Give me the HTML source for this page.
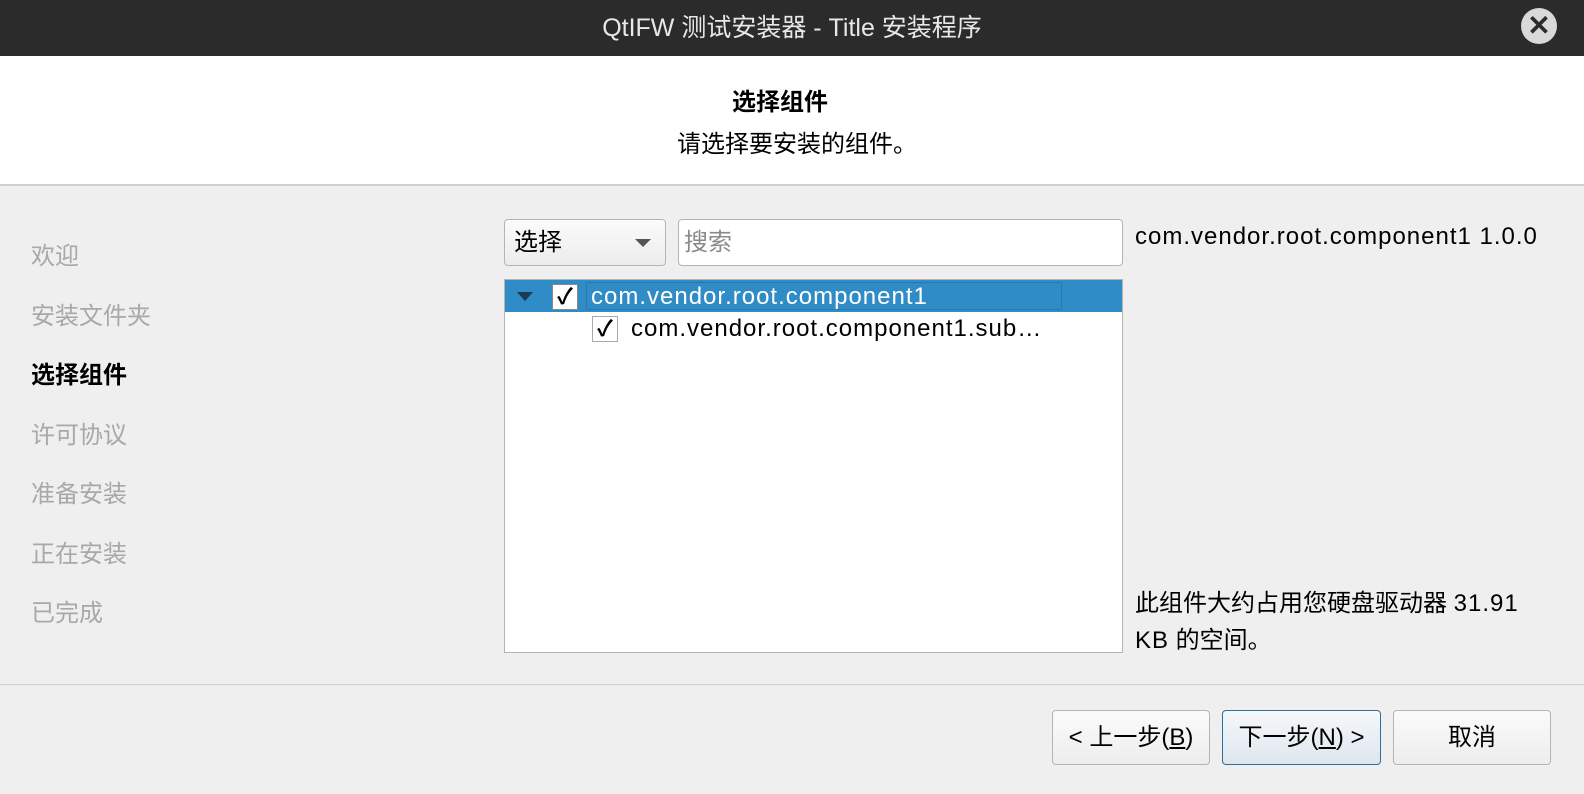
<!DOCTYPE html>
<html><head><meta charset="utf-8"><style>
*{margin:0;padding:0;box-sizing:border-box}
body{width:1584px;height:794px;background:#efefef;font-family:"Liberation Sans","Noto Sans CJK SC",sans-serif;position:relative;overflow:hidden;color:#000}
.a{position:absolute;white-space:nowrap}
.l{letter-spacing:1px}
</style></head><body>
<div class="a" style="left:0;top:0;width:1584px;height:56px;background:#2b2b2b;color:#e8e8e8;font-size:25px;line-height:56px;text-align:center">QtIFW 测试安装器 - Title 安装程序</div>
<div class="a" style="left:1521px;top:8px;width:36px;height:36px;border-radius:50%;background:#d9d9d9;color:#2b2b2b;font-size:28px;font-weight:bold;line-height:36px;text-align:center">✕</div>
<div class="a" style="left:0;top:56px;width:1584px;height:130px;background:#fff;border-bottom:2px solid #cfcfcf"></div>
<div class="a" style="left:0;top:82px;width:1560px;text-align:center;font-size:24px;font-weight:bold">选择组件</div>
<div class="a" style="left:0;top:124px;width:1594px;text-align:center;font-size:24px">请选择要安装的组件。</div>
<div class="a" style="left:31px;top:227px;font-size:24px;line-height:59.5px;color:#a8a8a8">欢迎<br>安装文件夹<br><b style="color:#000">选择组件</b><br>许可协议<br>准备安装<br>正在安装<br>已完成</div>
<div class="a" style="left:504px;top:219px;width:162px;height:47px;border:1px solid #b4b4b4;border-radius:4px;background:linear-gradient(#fbfbfb,#ececec);font-size:24px;line-height:45px;padding-left:9px">选择<span style="position:absolute;left:130px;top:19px;border-left:8px solid transparent;border-right:8px solid transparent;border-top:8px solid #555"></span></div>
<div class="a" style="left:678px;top:219px;width:445px;height:47px;border:1px solid #b4b4b4;border-radius:4px;background:#fff;font-size:24px;line-height:45px;padding-left:5px;color:#8a8a8a">搜索</div>
<div class="a" style="left:504px;top:279px;width:619px;height:374px;border:1px solid #b4b4b4;background:#fff"></div>
<div class="a" style="left:505px;top:280px;width:617px;height:32px;background:#308cc6"></div>
<div class="a" style="left:586px;top:282px;width:476px;height:28px;border:1px solid #2a78aa"></div>
<div class="a" style="left:517px;top:292px;border-left:8px solid transparent;border-right:8px solid transparent;border-top:9px solid #1a3a55"></div>
<div class="a" style="left:552px;top:284px;width:26px;height:26px;background:#fff;border:1px solid #888;font-size:22px;line-height:24px;text-align:center;font-weight:bold">✓</div>
<div class="a l" style="left:591px;top:282px;font-size:24px;line-height:30px;color:#fff">com.vendor.root.component1</div>
<div class="a" style="left:592px;top:316px;width:26px;height:26px;background:#fff;border:1px solid #aaa;font-size:22px;line-height:24px;text-align:center;font-weight:bold">✓</div>
<div class="a l" style="left:631px;top:314px;font-size:24px;line-height:30px">com.vendor.root.component1.sub…</div>
<div class="a l" style="left:1135px;top:222px;font-size:24px;line-height:30px">com.vendor.root.component1 1.0.0</div>
<div class="a" style="left:1135px;top:585px;font-size:24px;line-height:37px">此组件大约占用您硬盘驱动器 <span class="l">31.91</span><br><span class="l">KB</span> 的空间。</div>
<div class="a" style="left:0;top:684px;width:1584px;border-top:1px solid #cfcfcf"></div>
<div class="a" style="left:1052px;top:710px;width:158px;height:55px;border:1px solid #b4b4b4;border-radius:4px;background:linear-gradient(#fbfbfb,#ededed);font-size:24px;line-height:53px;text-align:center">&lt; 上一步(<u>B</u>)</div>
<div class="a" style="left:1222px;top:710px;width:159px;height:55px;border:1px solid #2a70a0;border-radius:4px;background:linear-gradient(#f6f8fa,#dde6ee);font-size:24px;line-height:53px;text-align:center">下一步(<u>N</u>) &gt;</div>
<div class="a" style="left:1393px;top:710px;width:158px;height:55px;border:1px solid #b4b4b4;border-radius:4px;background:linear-gradient(#fbfbfb,#ededed);font-size:24px;line-height:53px;text-align:center">取消</div>
</body></html>
